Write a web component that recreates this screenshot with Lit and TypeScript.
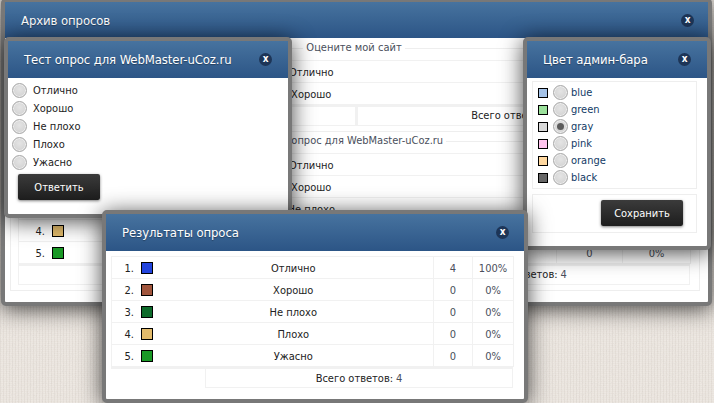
import { LitElement, html, css } from "lit";
import { customElement } from "lit/decorators.js";

const ANSWERS = ["Отлично", "Хорошо", "Не плохо", "Плохо", "Ужасно"];
const COLORS = ["#2244dd", "#a0553c", "#0e6b2b", "#e2bb6b", "#1a9926"];
const ADMIN = [
  ["blue", "#a5c3e8"],
  ["green", "#9be09b"],
  ["gray", "#d8d8d8"],
  ["pink", "#ffc4ee"],
  ["orange", "#ffd8a0"],
  ["black", "#666666"],
];

@customElement("app-root")
export class AppRoot extends LitElement {
  static styles = css`
    :host {
      display: block;
      position: relative;
      width: 714px;
      height: 403px;
      overflow: hidden;
      font: 11px "DejaVu Sans Condensed", "DejaVu Sans", sans-serif;
      font-stretch: condensed;
      color: #222;
      background-color: #ede7e0;
      background-image:
        repeating-linear-gradient(90deg, rgba(120, 105, 90, 0.07) 0 1px, transparent 1px 3px),
        repeating-linear-gradient(0deg, rgba(255, 255, 255, 0.14) 0 1px, transparent 1px 2px);
    }
    .tex {
      position: absolute;
      inset: 0;
      width: 714px;
      height: 403px;
      opacity: 0.14;
    }
    .win {
      position: absolute;
      box-sizing: border-box;
      border: 4px solid #787878;
      border-radius: 5px;
      background: #fff;
      box-shadow: 0 3px 22px rgba(0, 0, 0, 0.72);
    }
    .archive { left: 1px; top: -2px; width: 711px; height: 308px; }
    .test { left: 4px; top: 37px; width: 288px; height: 181px; }
    .color { left: 523px; top: 37px; width: 188px; height: 213px; }
    .results { left: 102px; top: 210px; width: 426px; height: 193px; }

    .title {
      box-sizing: border-box;
      height: 37px;
      display: flex;
      align-items: center;
      justify-content: space-between;
      background: linear-gradient(#47739f, #2c5586);
      color: #fff;
      font-size: 13px;
      letter-spacing: -0.1px;
      text-shadow: 0 1px 1px rgba(0, 0, 0, 0.35);
    }
    .archive .title { height: 36px; padding: 0 14px 0 16px; }
    .test .title { padding: 0 16px 0 16px; }
    .color .title { padding: 0 16px 0 16px; }
    .results .title { padding: 0 15px 0 16px; }
    .close {
      width: 13px;
      height: 13px;
      border-radius: 50%;
      background: #1d3557;
      display: flex;
      align-items: center;
      justify-content: center;
      font-size: 10px;
      line-height: 1;
      font-weight: 700;
      text-shadow: none;
      padding-bottom: 1px;
      box-sizing: border-box;
    }

    /* tables */
    .tbl { border-collapse: collapse; table-layout: fixed; }
    .tbl td {
      box-sizing: border-box;
      height: 22px;
      padding: 1px 0 0;
      text-align: center;
      border: 1px solid #f1f1f1;
    }
    .tbl td.num { text-align: left; border-right: none; padding-top: 0; }
    .tbl td.name { border-left: none; }
    .numin { display: flex; align-items: center; justify-content: flex-end; gap: 7px; padding-right: 1px; }
    .numin .n { padding-top: 2px; }
    .sw {
      box-sizing: border-box;
      width: 12px;
      height: 12px;
      border: 1px solid #000;
      flex: none;
    }
    .dim { color: #4a4f5c; }
    .sumrow { display: flex; height: 21px; box-sizing: border-box; border-top: 2px solid #f1f1f1; }
    .sumrow .empty { flex: none; box-sizing: border-box; }
    .sumrow .sum {
      flex: 1;
      display: flex;
      align-items: center;
      justify-content: center;
      gap: 3px;
      border: 1px solid #f1f1f1;
      border-top: none;
    }

    /* archive */
    .abody { padding: 2px 8px 0 5px; }
    fieldset {
      margin: 0 0 1px;
      padding: 4px 9px 5px 7px;
      border: 1px solid #eeeeee;
      min-width: 0;
    }
    legend {
      margin: 0 auto;
      padding: 0 3px;
      line-height: 16px;
      height: 16px;
      color: #4a4f5c;
    }
    .archive .tbl { width: 672px; }
    .archive .c1 { width: 48px; }
    .archive .c2 { width: 490px; }
    .archive .c3 { width: 66px; }
    .archive .c4 { width: 68px; }
    .archive .numin { width: 45px; }
    .archive .sumrow .empty { width: 339px; border: 1px solid #f1f1f1; border-top: none; border-right-width: 2px; }
    .archive .sumrow .sum { padding-bottom: 2px; }
    .archive .sumrow .shift { padding-right: 18px; }

    /* test */
    .tbody { padding: 3px 0 0 4px; }
    .opt { display: flex; align-items: center; height: 18px; gap: 6px; }
    .radio {
      box-sizing: border-box;
      width: 15px;
      height: 15px;
      flex: none;
      border-radius: 50%;
      border: 1px solid #a8a8a8;
      background: radial-gradient(circle at 50% 40%, #e4e4e4, #cecece);
      box-shadow: inset 0 0 0 1px #efefef;
      display: flex;
      align-items: center;
      justify-content: center;
    }
    .radio.on::after {
      content: "";
      width: 7px;
      height: 7px;
      border-radius: 50%;
      background: #5c5c5c;
    }
    .btn {
      box-sizing: border-box;
      width: 82px;
      height: 26px;
      display: flex;
      align-items: center;
      justify-content: center;
      color: #fff;
      border-radius: 2px;
      background: linear-gradient(#3b3b3b, #1d1d1d);
      box-shadow: 0 1px 3px rgba(0, 0, 0, 0.5);
    }
    .test .btn { margin: 3px 0 0 6px; }

    /* colour */
    .cbody { padding: 3px 0 0 5px; }
    .box { box-sizing: border-box; width: 165px; border: 1px solid #eeeeee; }
    .list { height: 108px; padding: 2px 0 0 5px; }
    .copt { display: flex; align-items: center; height: 17px; color: #123a66; }
    .csw {
      box-sizing: border-box;
      width: 10px;
      height: 10px;
      border: 1px solid #000;
      flex: none;
      margin-right: 5px;
    }
    .copt .radio { margin-right: 3px; }
    .foot {
      margin-top: 5px;
      height: 39px;
      display: flex;
      align-items: flex-start;
      justify-content: flex-end;
      padding: 5px 13px 0 0;
    }

    /* results */
    .rbody { padding: 5px 0 0 5px; }
    .results .tbl { width: 402px; }
    .results .c1 { width: 42px; }
    .results .c2 { width: 280px; }
    .results .c3 { width: 39px; }
    .results .c4 { width: 41px; }
    .results .numin { width: 41px; }
    .results .sumrow { width: 402px; }
    .results .sumrow .empty { width: 94px; }
    .results .sum { border-left: 1px solid #f1f1f1; }
  `;

  private table(rows: { count: number; pct: string }[], first = 0) {
    return html`<table class="tbl">
      <colgroup><col class="c1" /><col class="c2" /><col class="c3" /><col class="c4" /></colgroup>
      ${rows.map(
        (r, i) => html`<tr>
          <td class="num">
            <div class="numin">
              <span class="n">${first + i + 1}.</span><span class="sw" style="background:${COLORS[first + i]}"></span>
            </div>
          </td>
          <td class="name">${ANSWERS[first + i]}</td>
          <td class="dim">${r.count}</td>
          <td class="dim">${r.pct}</td>
        </tr>`
      )}
    </table>`;
  }

  private sum(total: number, cls = "") {
    return html`<div class="sumrow">
      <div class="empty"></div>
      <div class="sum ${cls}"><span>Всего ответов:</span><span class="dim">${total}</span></div>
    </div>`;
  }

  private head(title: string) {
    return html`<div class="title"><span>${title}</span><span class="close">x</span></div>`;
  }

  render() {
    const five = [
      { count: 4, pct: "100%" },
      { count: 0, pct: "0%" },
      { count: 0, pct: "0%" },
      { count: 0, pct: "0%" },
      { count: 0, pct: "0%" },
    ];
    return html`
      <svg class="tex" aria-hidden="true">
        <filter id="n"><feTurbulence type="fractalNoise" baseFrequency="0.8 1.1" numOctaves="2" /><feColorMatrix type="saturate" values="0" /></filter>
        <rect width="714" height="403" filter="url(#n)" />
      </svg>
      <section class="win archive">
        ${this.head("Архив опросов")}
        <div class="abody">
          <fieldset>
            <legend>Оцените мой сайт</legend>
            ${this.table(five.slice(0, 2))} ${this.sum(4, "shift")}
          </fieldset>
          <fieldset>
            <legend>Тест опрос для WebMaster-uCoz.ru</legend>
            ${this.table(five)} ${this.sum(4)}
          </fieldset>
        </div>
      </section>

      <section class="win test">
        ${this.head("Тест опрос для WebMaster-uCoz.ru")}
        <div class="tbody">
          ${ANSWERS.map((a) => html`<div class="opt"><span class="radio"></span><span>${a}</span></div>`)}
          <div class="btn">Ответить</div>
        </div>
      </section>

      <section class="win color">
        ${this.head("Цвет админ-бара")}
        <div class="cbody">
          <div class="box list">
            ${ADMIN.map(
              ([n, c]) => html`<div class="copt">
                <span class="csw" style="background:${c}"></span>
                <span class="radio ${n === "gray" ? "on" : ""}"></span>
                <span>${n}</span>
              </div>`
            )}
          </div>
          <div class="box foot"><div class="btn">Сохранить</div></div>
        </div>
      </section>

      <section class="win results">
        ${this.head("Результаты опроса")}
        <div class="rbody">${this.table(five)} ${this.sum(4)}</div>
      </section>
    `;
  }
}
